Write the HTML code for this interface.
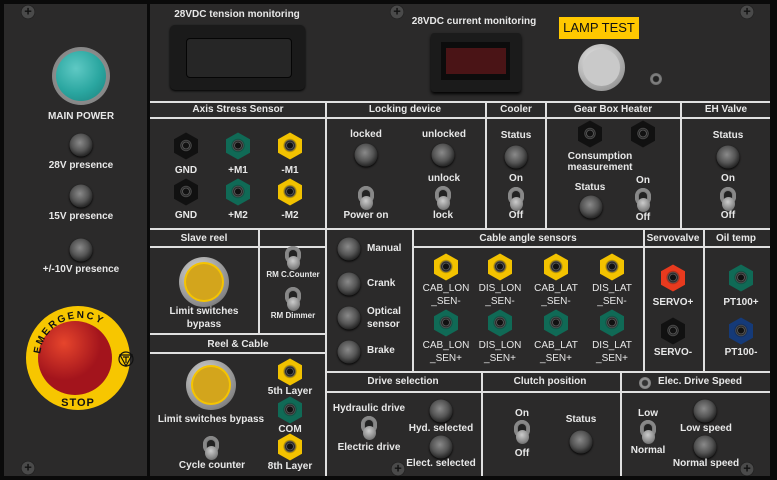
<!DOCTYPE html>
<html><head><meta charset="utf-8"><style>
*{margin:0;padding:0;box-sizing:border-box}
body{width:777px;height:480px;background:#0a0a0a;position:relative;overflow:hidden;font-family:"Liberation Sans",sans-serif;font-weight:bold;font-size:10px;color:#e8e8e8}
.p{position:absolute;background:#2b2a2a}
.h{position:absolute;background:#e0e0e0}
.c{position:absolute;transform:translate(-50%,-50%);white-space:nowrap;text-align:center;line-height:12px}
.led{position:absolute;transform:translate(-50%,-50%);width:23px;height:23px;border-radius:50%;background:radial-gradient(circle at 45% 40%,#8a8a8a 0,#555 45%,#2a2a2a 70%,#151515 100%);box-shadow:0 1px 2px #000}
.tg{position:absolute;transform:translate(-50%,-50%);width:16px;height:26px}
.tg:before{content:"";position:absolute;left:0;top:0;width:16px;height:18px;border-radius:8px;background:#7a7a7a;box-shadow:inset 0 0 0 3px #888}
.tg:after{content:"";position:absolute;left:2px;top:10px;width:13px;height:14px;border-radius:50%;background:radial-gradient(circle at 45% 35%,#ccc,#888 60%,#555)}
.tg i{position:absolute;left:4px;top:4px;width:8px;height:10px;border-radius:4px 4px 0 0;background:#222;z-index:0}
.hx{position:absolute;transform:translate(-50%,-50%);width:24px;height:27px;clip-path:polygon(50% 0,100% 25%,100% 75%,50% 100%,0 75%,0 25%)}
.hx:after{content:"";position:absolute;left:5px;top:6px;width:14px;height:14px;border-radius:50%;background:radial-gradient(circle,#111 0,#111 28%,#666 34%,#1a1a1a 44%,#555 52%,rgba(0,0,0,.25) 62%,rgba(0,0,0,0) 72%)}
.y{background:#f2c200}.g{background:#106a56}.k{background:#111}.r{background:#e83a1e}.b{background:#153a78}
.sc{position:absolute;transform:translate(-50%,-50%);width:13px;height:13px;border-radius:50%;background:#4a4a4a;box-shadow:0 0 1px #000}
.sc:after{content:"+";position:absolute;left:0;top:-2px;width:13px;text-align:center;color:#111;font-size:13px}
.btn{position:absolute;transform:translate(-50%,-50%);width:50px;height:50px;border-radius:50%;background:radial-gradient(circle at 40% 35%,#ddd,#888 70%,#555)}
.btn i{position:absolute;left:7px;top:7px;width:36px;height:36px;border-radius:50%;background:#d3a51c;box-shadow:0 0 0 2px #f5c400}
</style></head><body>
<div class="p" style="left:4px;top:4px;width:143px;height:472px"></div>
<div class="p" style="left:150px;top:4px;width:620px;height:472px"></div>

<div class="h" style="left:150px;top:101px;width:620px;height:2px"></div>
<div class="h" style="left:150px;top:117px;width:620px;height:2px"></div>
<div class="h" style="left:150px;top:228px;width:620px;height:2px"></div>
<div class="h" style="left:325px;top:101px;width:2px;height:375px"></div>
<div class="h" style="left:485px;top:101px;width:2px;height:128px"></div>
<div class="h" style="left:545px;top:101px;width:2px;height:128px"></div>
<div class="h" style="left:680px;top:101px;width:2px;height:128px"></div>
<div class="h" style="left:150px;top:246px;width:176px;height:2px"></div>
<div class="h" style="left:258px;top:228px;width:2px;height:106px"></div>
<div class="h" style="left:150px;top:333px;width:176px;height:2px"></div>
<div class="h" style="left:150px;top:352px;width:176px;height:2px"></div>
<div class="h" style="left:412px;top:228px;width:2px;height:144px"></div>
<div class="h" style="left:412px;top:246px;width:358px;height:2px"></div>
<div class="h" style="left:643px;top:228px;width:2px;height:144px"></div>
<div class="h" style="left:703px;top:228px;width:2px;height:144px"></div>
<div class="h" style="left:326px;top:371px;width:444px;height:2px"></div>
<div class="h" style="left:326px;top:391px;width:444px;height:2px"></div>
<div class="h" style="left:481px;top:371px;width:2px;height:105px"></div>
<div class="h" style="left:620px;top:371px;width:2px;height:105px"></div>

<div class="sc" style="left:28px;top:12px"></div>
<div class="sc" style="left:28px;top:468px"></div>
<div style="position:absolute;left:52px;top:47px;width:58px;height:58px;border-radius:50%;background:radial-gradient(circle,#aaa,#777);"></div>
<div style="position:absolute;left:56px;top:51px;width:50px;height:50px;border-radius:50%;background:radial-gradient(circle at 40% 35%,#5fc9c4,#2aa6a0 55%,#1b7f7b)"></div>
<div class="c" style="left:81px;top:117px">MAIN POWER</div>
<div class="led" style="left:81px;top:145px"></div><div class="c" style="left:81px;top:166px">28V presence</div>
<div class="led" style="left:81px;top:196px"></div><div class="c" style="left:81px;top:217px">15V presence</div>
<div class="led" style="left:81px;top:250px"></div><div class="c" style="left:81px;top:270px">+/-10V presence</div>
<svg style="position:absolute;left:26px;top:306px" width="112" height="106" viewBox="0 0 112 106">
<defs><radialGradient id="rg" cx="35%" cy="30%"><stop offset="0" stop-color="#e6452c"/><stop offset="1" stop-color="#a3141c"/></radialGradient>
<path id="ta" d="M14,52 A40,40 0 0 1 94,52"/></defs>
<circle cx="52" cy="52" r="52" fill="#f7c600"/>
<circle cx="49" cy="52" r="37" fill="url(#rg)"/>
<text font-family="Liberation Sans" font-size="10" fill="#111" letter-spacing="2"><textPath href="#ta" startOffset="4">EMERGENCY</textPath></text>
<text x="52" y="100" text-anchor="middle" font-family="Liberation Sans" font-size="11" fill="#111" letter-spacing="1">STOP</text>
<circle cx="100" cy="53" r="7" fill="none" stroke="#111" stroke-width="1.2"/><path d="M94,49 L106,49 L100,60 Z M97,51 L103,51 M100,51 L100,57" fill="none" stroke="#111" stroke-width="1.2"/>
</svg>

<div class="c" style="left:237px;top:15px">28VDC tension monitoring</div>
<div style="position:absolute;left:170px;top:25px;width:135px;height:65px;border-radius:5px;background:#1a1a1a;box-shadow:0 1px 2px #000"></div>
<div style="position:absolute;left:186px;top:38px;width:106px;height:40px;border-radius:4px;background:#262626;border:1px solid #050505"></div>
<div class="sc" style="left:397px;top:12px"></div>
<div class="c" style="left:474px;top:22px">28VDC current monitoring</div>
<div style="position:absolute;left:431px;top:33px;width:90px;height:59px;background:#1b1b1b;border-radius:3px;box-shadow:0 2px 3px #000"></div>
<div style="position:absolute;left:441px;top:42px;width:69px;height:38px;background:#0c0c0c"></div>
<div style="position:absolute;left:446px;top:48px;width:60px;height:26px;background:#4a1416"></div>
<div style="position:absolute;left:559px;top:17px;width:80px;height:22px;background:#ffc800;color:#111;font-weight:normal;font-size:13px;text-align:center;line-height:22px">LAMP TEST</div>
<div style="position:absolute;left:578px;top:44px;width:47px;height:47px;border-radius:50%;background:radial-gradient(circle at 40% 35%,#eee,#999 75%,#666)"></div>
<div style="position:absolute;left:583px;top:49px;width:37px;height:37px;border-radius:50%;background:#c9c9c9"></div>
<div style="position:absolute;left:650px;top:73px;width:12px;height:12px;border-radius:50%;background:radial-gradient(circle,#222 30%,#888 45%,#444)"></div>
<div class="sc" style="left:747px;top:12px"></div>

<div class="c" style="left:238px;top:110px">Axis Stress Sensor</div>
<div class="c" style="left:405px;top:110px">Locking device</div>
<div class="c" style="left:516px;top:110px">Cooler</div>
<div class="c" style="left:613px;top:110px">Gear Box Heater</div>
<div class="c" style="left:726px;top:110px">EH Valve</div>

<div class="hx k" style="left:186px;top:146px"></div><div class="hx g" style="left:238px;top:146px"></div><div class="hx y" style="left:290px;top:146px"></div>
<div class="c" style="left:186px;top:171px">GND</div><div class="c" style="left:238px;top:171px">+M1</div><div class="c" style="left:290px;top:171px">-M1</div>
<div class="hx k" style="left:186px;top:192px"></div><div class="hx g" style="left:238px;top:192px"></div><div class="hx y" style="left:290px;top:192px"></div>
<div class="c" style="left:186px;top:216px">GND</div><div class="c" style="left:238px;top:216px">+M2</div><div class="c" style="left:290px;top:216px">-M2</div>

<div class="c" style="left:366px;top:135px">locked</div><div class="c" style="left:444px;top:135px">unlocked</div>
<div class="led" style="left:366px;top:155px"></div><div class="led" style="left:443px;top:155px"></div>
<div class="c" style="left:444px;top:179px">unlock</div>
<div class="tg" style="left:366px;top:199px"><i></i></div><div class="tg" style="left:443px;top:199px"><i></i></div>
<div class="c" style="left:366px;top:216px">Power on</div><div class="c" style="left:443px;top:216px">lock</div>

<div class="c" style="left:516px;top:136px">Status</div><div class="led" style="left:516px;top:157px"></div>
<div class="c" style="left:516px;top:179px">On</div><div class="tg" style="left:516px;top:200px"><i></i></div><div class="c" style="left:516px;top:216px">Off</div>

<div class="hx k" style="left:590px;top:134px"></div><div class="hx k" style="left:643px;top:134px"></div>
<div class="c" style="left:600px;top:157px">Consumption</div><div class="c" style="left:600px;top:168px">measurement</div>
<div class="c" style="left:590px;top:188px">Status</div><div class="led" style="left:591px;top:207px"></div>
<div class="c" style="left:643px;top:181px">On</div><div class="tg" style="left:643px;top:201px"><i></i></div><div class="c" style="left:643px;top:218px">Off</div>

<div class="c" style="left:728px;top:136px">Status</div><div class="led" style="left:728px;top:157px"></div>
<div class="c" style="left:728px;top:179px">On</div><div class="tg" style="left:728px;top:200px"><i></i></div><div class="c" style="left:728px;top:216px">Off</div>

<div class="c" style="left:204px;top:239px">Slave reel</div>
<div class="btn" style="left:204px;top:282px"><i></i></div>
<div class="c" style="left:204px;top:312px">Limit switches</div><div class="c" style="left:204px;top:325px">bypass</div>
<div class="tg" style="left:293px;top:259px"><i></i></div><div class="c" style="left:293px;top:275px;font-size:8px">RM C.Counter</div>
<div class="tg" style="left:293px;top:300px"><i></i></div><div class="c" style="left:293px;top:316px;font-size:8px">RM Dimmer</div>

<div class="c" style="left:238px;top:345px">Reel &amp; Cable</div>
<div class="btn" style="left:211px;top:385px"><i></i></div>
<div class="c" style="left:211px;top:420px">Limit switches bypass</div>
<div class="tg" style="left:211px;top:449px"><i></i></div>
<div class="c" style="left:212px;top:466px">Cycle counter</div>
<div class="hx y" style="left:290px;top:372px"></div><div class="c" style="left:290px;top:392px">5th Layer</div>
<div class="hx g" style="left:290px;top:410px"></div><div class="c" style="left:290px;top:430px">COM</div>
<div class="hx y" style="left:290px;top:447px"></div><div class="c" style="left:290px;top:467px">8th Layer</div>

<div class="led" style="left:349px;top:249px"></div><div class="c" style="left:367px;top:249px;transform:translate(0,-50%);text-align:left">Manual</div>
<div class="led" style="left:349px;top:284px"></div><div class="c" style="left:367px;top:284px;transform:translate(0,-50%);text-align:left">Crank</div>
<div class="led" style="left:349px;top:318px"></div><div class="c" style="left:367px;top:318px;transform:translate(0,-50%);text-align:left;line-height:13px">Optical<br>sensor</div>
<div class="led" style="left:349px;top:352px"></div><div class="c" style="left:367px;top:351px;transform:translate(0,-50%);text-align:left">Brake</div>

<div class="c" style="left:528px;top:239px">Cable angle sensors</div>
<div class="hx y" style="left:446px;top:267px"></div><div class="hx y" style="left:500px;top:267px"></div><div class="hx y" style="left:556px;top:267px"></div><div class="hx y" style="left:612px;top:267px"></div>
<div class="c" style="left:446px;top:295px;font-weight:normal;line-height:13px">CAB_LON<br>_SEN-</div>
<div class="c" style="left:500px;top:295px;font-weight:normal;line-height:13px">DIS_LON<br>_SEN-</div>
<div class="c" style="left:556px;top:295px;font-weight:normal;line-height:13px">CAB_LAT<br>_SEN-</div>
<div class="c" style="left:612px;top:295px;font-weight:normal;line-height:13px">DIS_LAT<br>_SEN-</div>
<div class="hx g" style="left:446px;top:323px"></div><div class="hx g" style="left:500px;top:323px"></div><div class="hx g" style="left:556px;top:323px"></div><div class="hx g" style="left:612px;top:323px"></div>
<div class="c" style="left:446px;top:352px;font-weight:normal;line-height:13px">CAB_LON<br>_SEN+</div>
<div class="c" style="left:500px;top:352px;font-weight:normal;line-height:13px">DIS_LON<br>_SEN+</div>
<div class="c" style="left:556px;top:352px;font-weight:normal;line-height:13px">CAB_LAT<br>_SEN+</div>
<div class="c" style="left:612px;top:352px;font-weight:normal;line-height:13px">DIS_LAT<br>_SEN+</div>

<div class="c" style="left:673px;top:239px">Servovalve</div>
<div class="hx r" style="left:673px;top:278px"></div><div class="c" style="left:673px;top:303px">SERVO+</div>
<div class="hx k" style="left:673px;top:331px"></div><div class="c" style="left:673px;top:353px">SERVO-</div>
<div class="c" style="left:736px;top:239px">Oil temp</div>
<div class="hx g" style="left:741px;top:278px"></div><div class="c" style="left:741px;top:303px">PT100+</div>
<div class="hx b" style="left:741px;top:331px"></div><div class="c" style="left:741px;top:353px">PT100-</div>

<div class="c" style="left:403px;top:382px">Drive selection</div>
<div class="c" style="left:369px;top:409px">Hydraulic drive</div>
<div class="tg" style="left:369px;top:429px"><i></i></div>
<div class="c" style="left:369px;top:448px">Electric drive</div>
<div class="led" style="left:441px;top:411px"></div><div class="c" style="left:441px;top:429px">Hyd. selected</div>
<div class="led" style="left:441px;top:447px"></div><div class="c" style="left:441px;top:464px">Elect. selected</div>
<div class="sc" style="left:398px;top:469px"></div>

<div class="c" style="left:550px;top:382px">Clutch position</div>
<div class="c" style="left:522px;top:414px">On</div><div class="tg" style="left:522px;top:433px"><i></i></div><div class="c" style="left:522px;top:454px">Off</div>
<div class="c" style="left:581px;top:420px">Status</div><div class="led" style="left:581px;top:442px"></div>

<div style="position:absolute;left:639px;top:377px;width:12px;height:12px;border-radius:50%;background:radial-gradient(circle,#333 30%,#999 45%,#555)"></div>
<div class="c" style="left:700px;top:382px">Elec. Drive Speed</div>
<div class="c" style="left:648px;top:414px">Low</div><div class="tg" style="left:648px;top:433px"><i></i></div><div class="c" style="left:648px;top:451px">Normal</div>
<div class="led" style="left:705px;top:411px"></div><div class="c" style="left:706px;top:429px">Low speed</div>
<div class="led" style="left:705px;top:447px"></div><div class="c" style="left:706px;top:464px">Normal speed</div>
<div class="sc" style="left:747px;top:469px"></div>
</body></html>
